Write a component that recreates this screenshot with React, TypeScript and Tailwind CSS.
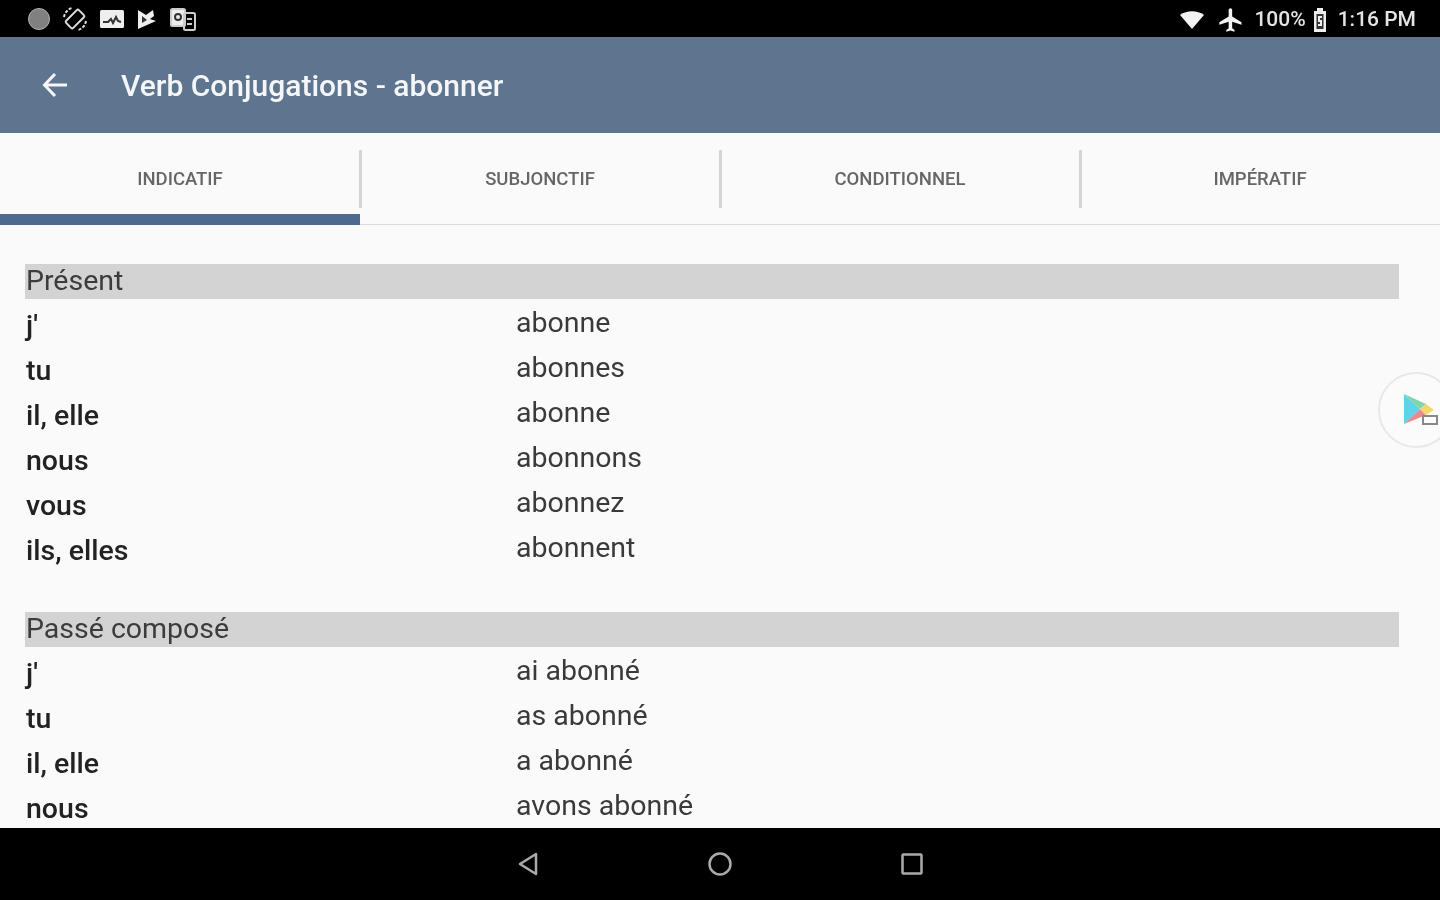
const tabs = ["INDICATIF", "SUBJONCTIF", "CONDITIONNEL", "IMPÉRATIF"];

const sections = [
  {
    title: "Présent",
    rows: [
      ["j'", "abonne"],
      ["tu", "abonnes"],
      ["il, elle", "abonne"],
      ["nous", "abonnons"],
      ["vous", "abonnez"],
      ["ils, elles", "abonnent"],
    ],
  },
  {
    title: "Passé composé",
    rows: [
      ["j'", "ai abonné"],
      ["tu", "as abonné"],
      ["il, elle", "a abonné"],
      ["nous", "avons abonné"],
    ],
  },
];

function StatusBar() {
  return (
    <div className="h-[37px] shrink-0 bg-black flex items-center justify-between pl-[28px] pr-[24px] text-[#e4e4e4]">
      <div className="flex items-center gap-[12px]">
        <div className="w-[22px] h-[22px] rounded-full bg-[#808080] border border-[#b4b4b4]" />
        <svg width="26" height="26" viewBox="0 0 26 26" fill="none" stroke="#ddd" strokeWidth="2">
          <rect x="8" y="4" width="10" height="18" rx="1.5" transform="rotate(45 13 13)" />
          <path d="M2 11a11 11 0 0 1 8-9M24 15a11 11 0 0 1-8 9" strokeDasharray="3 1.5" />
        </svg>
        <svg width="24" height="20" viewBox="0 0 24 20">
          <rect x="0" y="1" width="24" height="18" rx="1.5" fill="#eee" />
          <path d="M3 13h5l3-3 2 4 3-6 2 4 3 1" fill="none" stroke="#333" strokeWidth="2" />
        </svg>
        <svg width="22" height="22" viewBox="0 0 22 22" fill="#eee">
          <path d="M2 2l8 5 7-5 1 6-4 3 6 2-18 8z" />
          <path d="M6 8l5 4-5 3z" fill="#333" />
        </svg>
        <svg width="26" height="26" viewBox="0 0 26 26" fill="none" stroke="#ccc" strokeWidth="2">
          <rect x="1" y="3" width="14" height="17" rx="1.5" fill="#eee" />
          <rect x="14" y="7" width="11" height="17" rx="1.5" />
          <circle cx="8" cy="11" r="3" stroke="#333" />
          <path d="M17 13h5M17 18h5" />
        </svg>
      </div>
      <div className="flex items-center font-['Roboto',sans-serif] font-medium text-[21px] translate-y-[1px]">
        <svg width="26" height="20" viewBox="0 0 26 20" fill="#f2f2f2" className="mr-[12px]">
          <path d="M1 5c7-5 17-5 24 0L13 19z" />
        </svg>
        <svg width="28" height="28" viewBox="0 0 24 24" fill="#f2f2f2" className="mr-[9px]">
          <path d="M21 16v-2l-8-5V3.5c0-.83-.67-1.5-1.5-1.5S10 2.67 10 3.5V9l-8 5v2l8-2.5V19l-2 1.5V22l3.5-1 3.5 1v-1.5L13 19v-5.5l8 2.5z" />
        </svg>
        <span>100%</span>
        <svg width="14" height="24" viewBox="0 0 14 24" className="ml-[7px] mr-[11px]">
          <path d="M4 0h6v3h3v21H1V3h3z" fill="#eee" />
          <rect x="3.5" y="6" width="7" height="15" fill="#333" />
          <path d="M5 8h4v2H7v2h2v6H5v-2h2v-2H5z" fill="#eee" />
        </svg>
        <span>1:16 PM</span>
      </div>
    </div>
  );
}

function TabBar() {
  return (
    <div className="h-[92px] shrink-0 bg-[#fafafa] border-b border-[#dcdcdc] flex">
      {tabs.map((tab, i) => (
        <div key={tab} className="relative flex-1 flex items-center justify-center">
          <span className="text-[18.5px] font-medium text-[#666] pt-[2px]">{tab}</span>
          {i < 3 && <div className="absolute right-[-2px] top-[17px] w-[3px] h-[58px] bg-[#d2d4d6]" />}
          {i === 0 && <div className="absolute left-0 right-0 bottom-[-1px] h-[11px] bg-[#4e6a8e]" />}
        </div>
      ))}
    </div>
  );
}

function FloatingButton() {
  return (
    <div className="absolute right-[-14px] top-[372px] w-[76px] h-[76px] rounded-full bg-[#fbfbfb] border-2 border-[#e8e8e8] flex items-center pl-[22px]">
      <svg width="36" height="36" viewBox="0 0 36 36">
        <path d="M2 2v30l16-15z" fill="#5fd3ea" />
        <path d="M2 2l16 15 6-5z" fill="#7fd6a8" />
        <path d="M2 32l16-15 6 6z" fill="#e98a8f" />
        <path d="M24 12l-6 5 6 6 8-5z" fill="#f5d76e" />
        <rect x="21" y="24" width="14" height="8" fill="#fbfbfb" stroke="#888" strokeWidth="2" />
      </svg>
    </div>
  );
}

export default function App() {
  return (
    <div className="relative h-[900px] w-[1440px] overflow-hidden flex flex-col bg-[#fafafa] font-['Roboto',sans-serif] blur-[0.5px]">
      <StatusBar />
      <div className="h-[96px] shrink-0 bg-[#5e7590] flex items-center pl-[42px]">
        <svg width="26" height="26" viewBox="0 0 26 26" fill="none" stroke="#f4f6f8" strokeWidth="3">
          <path d="M25 13H3M13 2L2.5 13 13 24" />
        </svg>
        <h1 className="ml-[53px] pt-[2px] text-[30px] font-medium text-[#f4f6f8] leading-none">Verb Conjugations - abonner</h1>
      </div>
      <TabBar />
      <div className="flex-1 overflow-hidden pt-[39px] pl-[25px] pr-[41px]">
        {sections.map((section) => (
          <div key={section.title} className="mb-[39px]">
            <div className="h-[35px] bg-[#d3d3d3] flex items-center pl-[1px] text-[28.5px] text-[#3c3c3c]">{section.title}</div>
            <div className="pt-[4px]">
              {section.rows.map(([who, verb]) => (
                <div key={who} className="h-[45px] flex items-center text-[28.5px] text-[#3a3a3a]">
                  <span className="w-[491px] pl-[1px] font-medium text-[#222] translate-y-[1px]">{who}</span>
                  <span className="-translate-y-[2px]">{verb}</span>
                </div>
              ))}
            </div>
          </div>
        ))}
      </div>
      <div className="h-[72px] shrink-0 bg-black flex items-center justify-center gap-[168px] pb-[1px]">
        <svg width="24" height="26" viewBox="0 0 24 26" fill="none" stroke="#aaa" strokeWidth="2.5" strokeLinejoin="round">
          <path d="M20 3v20L4 13z" />
        </svg>
        <svg width="24" height="24" viewBox="0 0 24 24" fill="none" stroke="#aaa" strokeWidth="2.5">
          <circle cx="12" cy="12" r="10.5" />
        </svg>
        <svg width="24" height="24" viewBox="0 0 24 24" fill="none" stroke="#aaa" strokeWidth="2.5">
          <rect x="2.5" y="2.5" width="19" height="19" rx="1" />
        </svg>
      </div>
      <FloatingButton />
    </div>
  );
}
